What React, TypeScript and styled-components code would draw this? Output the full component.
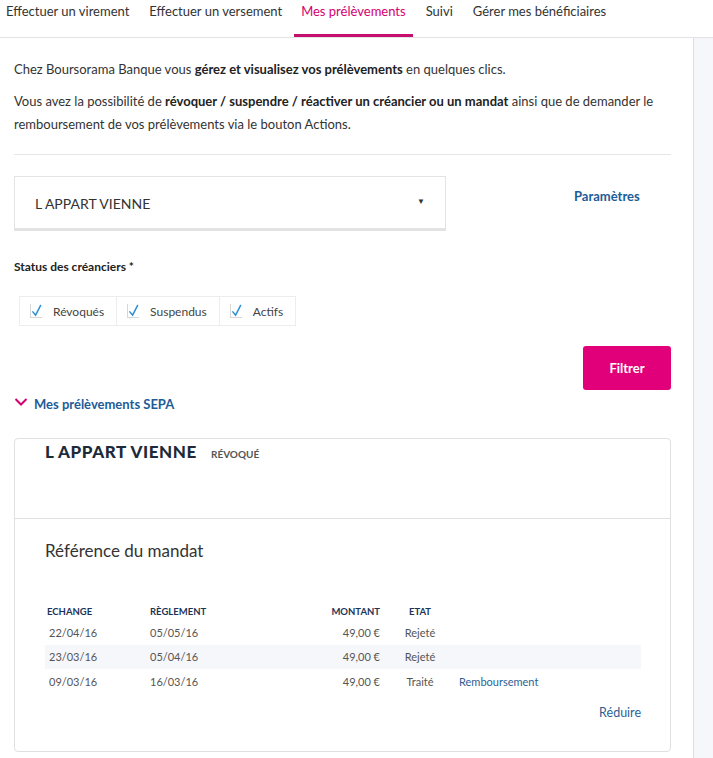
import React from 'react'
import styled, { createGlobalStyle } from 'styled-components'

const GlobalStyle = createGlobalStyle`
  body {
    margin: 0;
    background: #fff;
    font-family: Lato, 'Open Sans', Arial, sans-serif;
    color: #333;
  }
`

const tabs = [
  'Effectuer un virement',
  'Effectuer un versement',
  'Mes prélèvements',
  'Suivi',
  'Gérer mes bénéficiaires',
]

const rows = [
  { echange: '22/04/16', reglement: '05/05/16', montant: '49,00 €', etat: 'Rejeté' },
  { echange: '23/03/16', reglement: '05/04/16', montant: '49,00 €', etat: 'Rejeté' },
  { echange: '09/03/16', reglement: '16/03/16', montant: '49,00 €', etat: 'Traité', action: 'Remboursement' },
]

const App = () => {
  return (
    <>
      <GlobalStyle />
      <TabBar>
        {tabs.map(tab => (
          <Tab key={tab} active={tab === 'Mes prélèvements'}>
            {tab}
          </Tab>
        ))}
      </TabBar>

      <Layout>
        <Main>
          <Intro>
            Chez Boursorama Banque vous <b>gérez et visualisez vos prélèvements</b> en quelques clics.
          </Intro>
          <Intro>
            Vous avez la possibilité de <b>révoquer / suspendre / réactiver un créancier ou un mandat</b> ainsi que de
            demander le
            <br />
            remboursement de vos prélèvements via le bouton Actions.
          </Intro>
          <Divider />

          <SelectRow>
            <Select>
              <span>L APPART VIENNE</span>
              <Caret>▼</Caret>
            </Select>
            <SettingsLink>Paramètres</SettingsLink>
          </SelectRow>

          <FieldLabel>Status des créanciers *</FieldLabel>
          <CheckGroup>
            {['Révoqués', 'Suspendus', 'Actifs'].map(label => (
              <CheckItem key={label}>
                <CheckMark viewBox="0 0 12 14">
                  <path d="M2 8.5 L5 12 L10.5 1.5" fill="none" stroke="#2a8fd6" strokeWidth="1.6" strokeLinecap="round" />
                </CheckMark>
                {label}
              </CheckItem>
            ))}
          </CheckGroup>

          <ButtonRow>
            <FilterButton>Filtrer</FilterButton>
          </ButtonRow>

          <SectionToggle>
            <svg width="14" height="10" viewBox="0 0 14 10">
              <path d="M1.5 2 L7 7.5 L12.5 2" fill="none" stroke="#d4006f" strokeWidth="2" />
            </svg>
            Mes prélèvements SEPA
          </SectionToggle>

          <Card>
            <CardHeader>
              <CardTitle>L APPART VIENNE</CardTitle>
              <StatusTag>Révoqué</StatusTag>
            </CardHeader>
            <CardBody>
              <MandateTitle>Référence du mandat</MandateTitle>
              <Table>
                <thead>
                  <tr>
                    <Th>ECHANGE</Th>
                    <Th>RÈGLEMENT</Th>
                    <Th align="right">MONTANT</Th>
                    <Th align="center">ETAT</Th>
                    <Th />
                  </tr>
                </thead>
                <tbody>
                  {rows.map((row, i) => (
                    <Row key={i} striped={i % 2 === 1}>
                      <Td>{row.echange}</Td>
                      <Td>{row.reglement}</Td>
                      <Td align="right">{row.montant}</Td>
                      <Td align="center">{row.etat}</Td>
                      <Td>{row.action && <TableLink>{row.action}</TableLink>}</Td>
                    </Row>
                  ))}
                </tbody>
              </Table>
              <CollapseRow>
                <TableLink>Réduire</TableLink>
              </CollapseRow>
            </CardBody>
          </Card>
        </Main>
        <Sidebar />
      </Layout>
    </>
  )
}

export default App

const TabBar = styled.nav`
  display: flex;
  gap: 6px;
  height: 37px;
  border-bottom: 1px solid #e3e3e3;
`

const Tab = styled.div<{ active?: boolean }>`
  display: flex;
  align-items: center;
  padding: 0 7px 12px;
  margin-left: ${props => (props.active ? '-1px' : '0')};
  font-size: 13px;
  color: ${props => (props.active ? '#d4006f' : '#333')};
  border-bottom: 3px solid ${props => (props.active ? '#c50f6f' : 'transparent')};
  box-sizing: border-box;
  height: 37px;
  white-space: nowrap;

  &:first-child {
    padding-left: 6px;
  }
`

const Layout = styled.div`
  display: flex;
  min-height: 721px;
`

const Main = styled.main`
  width: 694px;
  box-sizing: border-box;
  padding: 20px 22px 6px 14px;
  border-right: 1px solid #dcdde2;
`

const Sidebar = styled.aside`
  flex: 1;
  background: #f6f7fb;
`

const Intro = styled.p`
  margin: 0 0 9px;
  font-size: 13px;
  line-height: 23px;
  color: #333;

  b {
    font-weight: 700;
    color: #222;
  }
`

const Divider = styled.hr`
  border: 0;
  border-top: 1px solid #e6e6e6;
  margin: 18px 0 21px;
`

const SelectRow = styled.div`
  display: flex;
  align-items: flex-start;
`

const Select = styled.div`
  width: 432px;
  height: 53px;
  box-sizing: border-box;
  display: flex;
  align-items: center;
  justify-content: space-between;
  padding: 2px 20px 0 20px;
  border: 1px solid #e4e4e4;
  box-shadow: 0 2px 0 #e2e2e2;
  font-size: 14px;
  color: #333;
`

const Caret = styled.span`
  font-size: 8px;
  color: #333;
  margin-top: -6px;
`

const SettingsLink = styled.a`
  margin: 12px 0 0 128px;
  font-size: 13px;
  font-weight: 700;
  color: #1d5c98;
`

const FieldLabel = styled.div`
  margin-top: 30px;
  font-size: 12px;
  font-weight: 700;
  color: #222;
`

const CheckGroup = styled.div`
  display: inline-flex;
  margin: 22px 0 0 6px;
`

const CheckItem = styled.label`
  display: flex;
  align-items: center;
  gap: 11px;
  height: 30px;
  box-sizing: border-box;
  padding: 0 12px 0 10px;
  border: 1px solid #ededed;
  margin-left: -1px;
  font-size: 12px;
  color: #444;
`

const CheckMark = styled.svg`
  width: 12px;
  height: 14px;
  border-left: 1px solid #d6d6d6;
  border-bottom: 1px solid #d6d6d6;
  box-sizing: border-box;
`

const ButtonRow = styled.div`
  display: flex;
  justify-content: flex-end;
  margin-top: 20px;
`

const FilterButton = styled.button`
  width: 88px;
  height: 44px;
  border: 0;
  border-radius: 3px;
  background: #e2007a;
  color: #fff;
  font-family: inherit;
  font-size: 13px;
  font-weight: 700;
`

const SectionToggle = styled.div`
  display: flex;
  align-items: center;
  gap: 6px;
  margin-top: 6px;
  font-size: 13px;
  font-weight: 700;
  color: #1d5c98;

  svg {
    margin-top: -4px;
  }
`

const Card = styled.section`
  margin-top: 26px;
  border: 1px solid #e0e0e0;
  border-radius: 4px;
  height: 314px;
  box-sizing: border-box;
`

const CardHeader = styled.div`
  display: flex;
  align-items: baseline;
  gap: 14px;
  height: 80px;
  box-sizing: border-box;
  padding: 2px 30px 0;
  border-bottom: 1px solid #e0e0e0;
`

const CardTitle = styled.h3`
  margin: 0;
  font-size: 17px;
  font-weight: 900;
  color: #1c2a3a;
  letter-spacing: 0.6px;
`

const StatusTag = styled.span`
  font-size: 10px;
  font-weight: 700;
  color: #555;
  text-transform: uppercase;
`

const CardBody = styled.div`
  padding: 21px 30px 0;
`

const MandateTitle = styled.h4`
  margin: 0 0 44px;
  font-size: 17px;
  font-weight: 400;
  color: #333;
`

const Table = styled.table`
  width: 596px;
  border-collapse: collapse;
  table-layout: fixed;
`

const Th = styled.th<{ align?: string }>`
  text-align: ${props => props.align || 'left'};
  font-size: 9.5px;
  font-weight: 700;
  color: #1c3557;
  padding: 0 0 3px 2px;
  height: 12px;

  &:nth-child(1) { width: 101px; }
  &:nth-child(2) { width: 140px; }
  &:nth-child(3) { width: 88px; padding-right: 2px; }
  &:nth-child(4) { width: 76px; padding-left: 0; }
`

const Row = styled.tr<{ striped?: boolean }>`
  background: ${props => (props.striped ? '#f6f7fb' : 'transparent')};
`

const Td = styled.td<{ align?: string }>`
  text-align: ${props => props.align || 'left'};
  height: 24.5px;
  padding: 0 0 0 4px;
  font-size: 11px;
  color: #555;

  &:nth-child(2) { padding-left: 2px; }
  &:nth-child(3) { padding-right: 2px; }
  &:nth-child(4) { padding-left: 0; }
  &:nth-child(5) { padding-left: 1px; }
`

const TableLink = styled.a`
  font-size: 11px;
  color: #2d5f95;
`

const CollapseRow = styled.div`
  display: flex;
  justify-content: flex-end;
  width: 596px;
  margin-top: 11px;

  a {
    font-size: 12.5px;
  }
`
